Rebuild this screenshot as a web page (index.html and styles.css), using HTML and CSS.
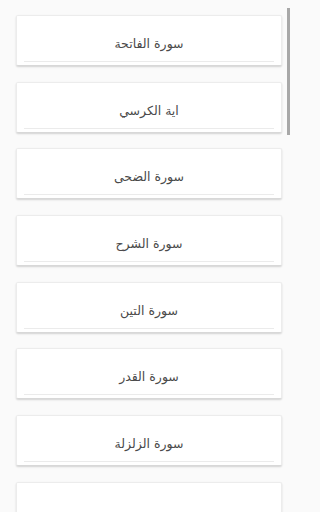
FILE: index.html
```html
<!DOCTYPE html>
<html lang="ar">
<head>
<meta charset="utf-8">
<link rel="stylesheet" href="styles.css">
</head>
<body>
<div class="screen">
  <ul class="list">
    <li class="card"><span class="title">سورة الفاتحة</span><span class="line"></span></li>
    <li class="card"><span class="title">اية الكرسي</span><span class="line"></span></li>
    <li class="card"><span class="title">سورة الضحى</span><span class="line"></span></li>
    <li class="card"><span class="title">سورة الشرح</span><span class="line"></span></li>
    <li class="card"><span class="title">سورة التين</span><span class="line"></span></li>
    <li class="card"><span class="title">سورة القدر</span><span class="line"></span></li>
    <li class="card"><span class="title">سورة الزلزلة</span><span class="line"></span></li>
    <li class="card card-partial"></li>
  </ul>
  <div class="scrollbar"></div>
</div>
</body>
</html>
```
FILE: styles.css
```css
html, body {
  margin: 0;
  padding: 0;
  background: #fafafa;
}
.screen {
  position: relative;
  width: 299px;
  height: 512px;
  overflow: hidden;
  background: #fafafa;
  font-family: "DejaVu Sans", sans-serif;
}
.list {
  list-style: none;
  margin: 0;
  padding: 15px 17px 0 16px;
  display: flex;
  flex-direction: column;
  gap: 15.67px;
}
.card {
  position: relative;
  height: 51px;
  flex: none;
  background: #ffffff;
  border: 1px solid #ececec;
  border-bottom-color: #d8d8d8;
  border-radius: 2px;
  box-shadow: 0 1px 2px rgba(0,0,0,0.16);
  box-sizing: border-box;
  display: flex;
  flex-direction: column;
  align-items: center;
  justify-content: flex-end;
  padding: 0 7px 3px;
}
.title {
  direction: rtl;
  font-size: 12.5px;
  color: #4a4a4a;
  line-height: 16px;
  margin-bottom: 9px;
}
.line {
  align-self: stretch;
  height: 1px;
  background: #ebebeb;
}
.scrollbar {
  position: absolute;
  top: 8px;
  left: 287px;
  width: 3px;
  height: 127px;
  background: #a8a8a8;
}
```
